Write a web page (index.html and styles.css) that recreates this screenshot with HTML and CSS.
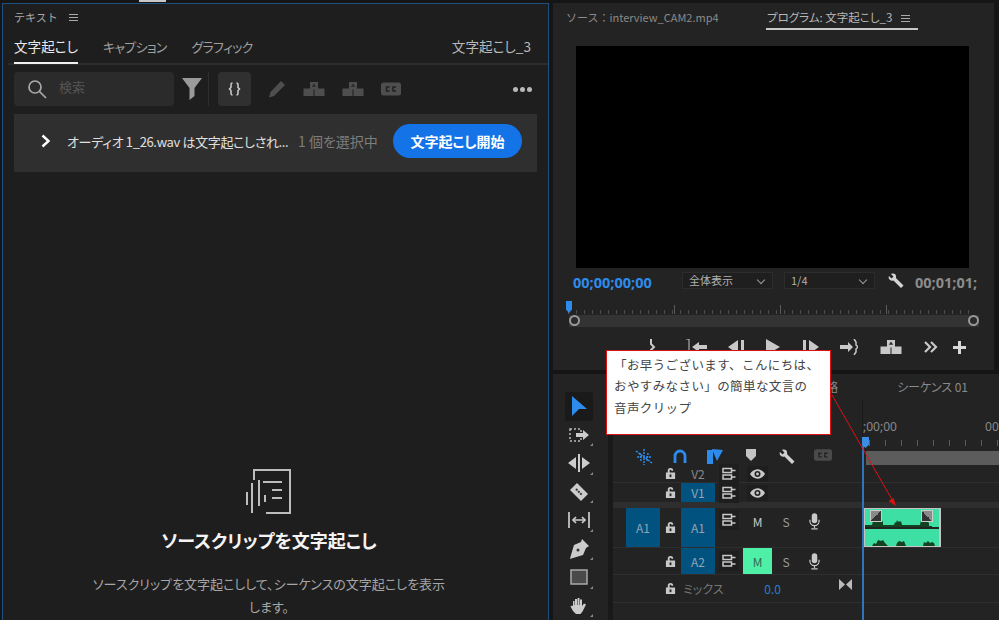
FILE: index.html
```html
<!DOCTYPE html>
<html lang="ja">

<head>
    <meta charset="UTF-8" />
    <meta name="viewport" content="width=device-width, initial-scale=1" />
    <title>文字起こし</title>
    <link rel="stylesheet" href="styles.css">
</head>

<body>
    <svg class="defs" width="0" height="0">
        <symbol id="i-lock" viewBox="0 0 12 14">
            <path d="M3 6V4a3 3 0 0 1 6 0h-2a1 1 0 0 0-2 0v2h6v7H1V6z" fill="currentColor" />
            <rect x="5" y="8" width="2" height="3" fill="#222" />
        </symbol>
        <symbol id="i-sync" viewBox="0 0 14 14">
            <path d="M1 1.500h8.500v4H1zM1 8h8.500v4H1zM9.500 3.500h4M9.500 10h4" fill="none" stroke="currentColor" stroke-width="1.500" />
        </symbol>
        <symbol id="i-eye" viewBox="0 0 16 10">
            <path d="M8 0c3.500 0 6.500 2.500 8 5-1.500 2.500-4.500 5-8 5S1.500 7.500 0 5c1.500-2.500 4.500-5 8-5z" fill="currentColor" />
            <circle cx="8" cy="5" r="3.200" fill="#222" />
            <circle cx="8" cy="5" r="1.500" fill="currentColor" />
        </symbol>
        <symbol id="i-mic" viewBox="0 0 12 18">
            <rect x="3" y="0" width="6" height="11" rx="3" fill="currentColor" />
            <path d="M1 7v1.500a5 5 0 0 0 10 0V7M6 13.500V16M2.500 17h7" fill="none" stroke="currentColor" stroke-width="1.300" />
        </symbol>
        <symbol id="i-lift" viewBox="0 0 22 14">
            <path d="M7 0h8v6.500h6.500V14h-10V7.500h-1V14H.5V6.500H7z" fill="currentColor" />
            <path d="M11 1.500l2.200 3.200H8.800z" fill="#2a2a2a" />
        </symbol>
        <symbol id="i-cc" viewBox="0 0 20 13">
            <rect width="20" height="13" rx="2.500" fill="currentColor" />
            <path d="M8.500 4.500H5.500v4h3M15 4.500h-3v4h3" fill="none" stroke="#222" stroke-width="1.500" />
        </symbol>
        <symbol id="i-wrench" viewBox="0 0 16 16">
            <path d="M1 3l2.500 2.500L5.500 3.500 3 1c2-1 4.500-.5 5 2 .2.800.1 1.500-.1 2.100L15.500 12.500 13 15 5.500 7.500C3 8.500-.5 6.500 1 3z" fill="currentColor" />
        </symbol>
    </svg>

    <div class="escritorio">
        <!-- panel de texto -->
        <section class="panel-texto">
            <header class="panel-cabecera">
                <span>テキスト</span>
                <span class="menu-lineas"></span>
            </header>
            <nav class="pestanas">
                <span class="pestana pestana-activa">文字起こし</span>
                <span class="pestana pestana-kana">キャプション</span>
                <span class="pestana pestana-kana">グラフィック</span>
                <span class="pestana-secuencia">文字起こし_3</span>
            </nav>
            <div class="barra-busqueda">
                <div class="buscador">
                    <svg width="20" height="20" viewBox="0 0 20 20" fill="none" stroke="#aaa" stroke-width="1.700">
                        <circle cx="8" cy="8" r="6" />
                        <path d="M12.500 12.500L19 19" />
                    </svg>
                    <span>検索</span>
                </div>
                <svg class="icono-filtro" width="20" height="24" viewBox="0 0 20 24">
                    <path d="M0 1h20l-7.500 10v8l-5 4V11z" fill="#9a9a9a" />
                </svg>
                <span class="separador"></span>
                <div class="boton-llaves">
                    <svg width="13" height="14" viewBox="0 0 13 14" fill="none" stroke="#ccc" stroke-width="1.500">
                        <path d="M4.500 1C3 1 3 2 3 3v2.500L1.500 7 3 8.500V11c0 1 0 2 1.500 2M8.500 1C10 1 10 2 10 3v2.500L11.500 7 10 8.500V11c0 1 0 2-1.500 2" />
                    </svg>
                </div>
                <svg class="icono-lapiz" width="18" height="18" viewBox="0 0 18 18">
                    <path d="M13 1l4 4L6 16l-5 1.500L2.500 12z" fill="#4e4e4e" />
                </svg>
                <svg class="icono-apagado" width="22" height="14"><use href="#i-lift" /></svg>
                <svg class="icono-apagado" width="22" height="14"><use href="#i-lift" /></svg>
                <svg class="icono-apagado" width="20" height="14"><use href="#i-cc" /></svg>
                <span class="puntos"><i></i><i></i><i></i></span>
            </div>
            <div class="aviso">
                <svg width="12" height="14" viewBox="0 0 12 14" fill="none" stroke="#fff" stroke-width="2.400">
                    <path d="M2.500 1.500L8.500 7l-6 5.500" />
                </svg>
                <span class="aviso-texto">オーディオ 1_26.wav は文字起こしされ...</span>
                <span class="aviso-cuenta">1 個を選択中</span>
                <button class="boton-iniciar">文字起こし開始</button>
            </div>
            <div class="vacio">
                <svg width="46" height="47" viewBox="0 0 46 47" fill="none" stroke="#bdbdbd" stroke-width="2">
                    <path d="M8 12V2h36v43H20M17 14h19M26 22h10M26 30h10M1 24v13M6 15v30M13 12v26M19 27v7" />
                </svg>
                <h2>ソースクリップを文字起こし</h2>
                <p>ソースクリップを文字起こしして、シーケンスの文字起こしを表示します。</p>
            </div>
        </section>

        <div class="columna-derecha">
            <!-- monitor de programa -->
            <section class="monitor">
                <nav class="monitor-pestanas">
                    <span class="monitor-fuente">ソース：interview_CAM2.mp4</span>
                    <span class="monitor-programa">プログラム: 文字起こし_3 <span class="menu-lineas"></span></span>
                </nav>
                <div class="video"></div>
                <div class="monitor-controles">
                    <span class="tiempo-azul">00;00;00;00</span>
                    <span class="desplegable">全体表示</span>
                    <span class="desplegable">1/4</span>
                    <svg class="llave" width="16" height="16"><use href="#i-wrench" /></svg>
                    <span class="tiempo-total">00;01;01;</span>
                </div>
                <div class="regla-programa"><span class="cabezal-programa"></span></div>
                <div class="barra-zoom"><i></i><i></i></div>
                <div class="transporte">
                    <svg width="14" height="16" viewBox="0 0 14 16" fill="none" stroke="#c8c8c8" stroke-width="2"><path d="M6 0v5l3 3-3 3v5" /></svg>
                    <svg width="22" height="16" viewBox="0 0 22 16" fill="#c8c8c8"><path d="M3 0v16M0 0h3" stroke="#c8c8c8" /><path d="M6 8l7-5v3h8v4h-8v3z" /></svg>
                    <svg width="16" height="14" viewBox="0 0 16 14" fill="#c8c8c8"><path d="M10 0v14L0 7zM13 0h3v14h-3z" /></svg>
                    <svg width="14" height="16" viewBox="0 0 14 16" fill="#c8c8c8"><path d="M0 0l14 8-14 8z" /></svg>
                    <svg width="16" height="14" viewBox="0 0 16 14" fill="#c8c8c8"><path d="M6 0v14l10-7zM0 0h3v14H0z" /></svg>
                    <svg width="18" height="16" viewBox="0 0 18 16" fill="#c8c8c8"><path d="M0 6h8V3l5 5-5 5v-3H0z" /><path d="M14 0l2 3v3l2 2-2 2v3l-2 3" fill="none" stroke="#c8c8c8" stroke-width="1.500" /></svg>
                    <svg class="transporte-claro" width="22" height="14"><use href="#i-lift" /></svg>
                    <svg width="14" height="12" viewBox="0 0 14 12" fill="none" stroke="#c8c8c8" stroke-width="2.200"><path d="M1 1l5 5-5 5M7 1l5 5-5 5" /></svg>
                    <svg width="13" height="13" viewBox="0 0 13 13" fill="#d8d8d8"><path d="M5 0h3v5h5v3H8v5H5V8H0V5h5z" /></svg>
                </div>
            </section>

            <!-- linea de tiempo -->
            <section class="linea-tiempo">
                <aside class="herramientas">
                    <span class="herramienta herramienta-activa">
                        <svg width="16" height="20" viewBox="0 0 16 20"><path d="M1 0l15 13H8l-7 7z" fill="#2d8ceb" /></svg>
                    </span>
                    <span class="herramienta">
                        <svg width="20" height="14" viewBox="0 0 20 14"><path d="M1 1h11v12H1z" fill="none" stroke="#bbb" stroke-dasharray="2 2" stroke-width="1.500" /><path d="M7 5h7V2l6 5-6 5V9H7z" fill="#ccc" /></svg>
                    </span>
                    <span class="herramienta">
                        <svg width="22" height="18" viewBox="0 0 22 18" fill="#ccc"><path d="M0 9l8-6v12zM22 9l-8-6v12zM10 0h2v18h-2z" /></svg>
                    </span>
                    <span class="herramienta">
                        <svg width="18" height="18" viewBox="0 0 18 18"><path d="M7 0l11 11-7 7L0 7z" fill="#ccc" /><path d="M6 6l6 6" stroke="#333" stroke-width="2" stroke-dasharray="2 1" /></svg>
                    </span>
                    <span class="herramienta">
                        <svg width="22" height="16" viewBox="0 0 22 16" fill="none" stroke="#ccc" stroke-width="1.700"><path d="M1 0v16M21 0v16M5 8h12" /><path d="M8 5L5 8l3 3M14 5l3 3-3 3" /></svg>
                    </span>
                    <span class="herramienta">
                        <svg width="20" height="20" viewBox="0 0 20 20"><path d="M13 0l7 7-3 2-3 7-10 3-3 1 1-4 3-10 7-3z" fill="#ccc" /><circle cx="9" cy="11" r="1.500" fill="#333" /></svg>
                    </span>
                    <span class="herramienta">
                        <svg width="18" height="16" viewBox="0 0 18 16"><rect x="1" y="1" width="16" height="14" fill="#4a4a4a" stroke="#aaa" stroke-width="1.500" /></svg>
                    </span>
                    <span class="herramienta">
                        <svg width="18" height="18" viewBox="0 0 18 18"><path d="M3 9V4h1.500v4H5V2h2v6h.5V1h2v7h.5V2.500h2V9l2-2.500 2 1-3.500 7-2 2.500H6L3 14 .5 9.500 2 8.500z" fill="#ccc" /></svg>
                    </span>
                </aside>
                <div class="secuencia">
                    <nav class="secuencia-pestanas">
                        <span>略</span>
                        <span>シーケンス 01</span>
                    </nav>
                    <div class="secuencia-cabecera">
                        <div class="iconos-pista">
                            <svg width="18" height="16" viewBox="0 0 18 16" fill="none" stroke="#2d8ceb" stroke-width="1.500"><path d="M9 0v16M1 2l16 12M2 8h14M5 4l1 8M13 4l-1 8" stroke-dasharray="2 1" /></svg>
                            <svg width="14" height="14" viewBox="0 0 14 14" fill="none" stroke="#2d8ceb" stroke-width="2.800"><path d="M2 14V7a5 5 0 0 1 10 0v7" /></svg>
                            <svg width="16" height="16" viewBox="0 0 16 16"><path d="M0 1h6v14H0z" fill="#2d8ceb" /><path d="M5 0l11 1-6 11z" fill="#2d8ceb" /></svg>
                            <svg width="10" height="12" viewBox="0 0 10 12"><path d="M0 0h10v7l-5 5-5-5z" fill="#c4c4c4" /></svg>
                            <svg width="16" height="16" class="claro"><use href="#i-wrench" /></svg>
                            <svg width="18" height="12" class="apagado"><use href="#i-cc" /></svg>
                        </div>
                        <div class="tiempo-regla">
                            <div class="tiempo-marcas"><span>;00;00</span><span>00;</span></div>
                            <div class="regla-secuencia"></div>
                            <div class="zona-gris"></div>
                        </div>
                    </div>
                    <div class="pista pista-v2">
                        <svg class="c-candado" width="11" height="13"><use href="#i-lock" /></svg>
                        <span class="c-destino etiqueta-v2">V2</span>
                        <svg class="c-sync" width="14" height="14"><use href="#i-sync" /></svg>
                        <svg class="c-m ojo" width="15" height="10"><use href="#i-eye" /></svg>
                        <div class="carril"></div>
                    </div>
                    <div class="pista pista-v1">
                        <svg class="c-candado" width="11" height="13"><use href="#i-lock" /></svg>
                        <span class="c-destino caja-azul">V1</span>
                        <svg class="c-sync" width="14" height="14"><use href="#i-sync" /></svg>
                        <svg class="c-m ojo" width="15" height="10"><use href="#i-eye" /></svg>
                        <div class="carril"></div>
                    </div>
                    <div class="pista-separador"></div>
                    <div class="pista pista-a1">
                        <span class="c-origen caja-azul">A1</span>
                        <svg class="c-candado" width="11" height="13"><use href="#i-lock" /></svg>
                        <span class="c-destino caja-azul">A1</span>
                        <svg class="c-sync arriba" width="14" height="14"><use href="#i-sync" /></svg>
                        <span class="c-m arriba">M</span>
                        <span class="c-s arriba">S</span>
                        <svg class="c-mic arriba" width="11" height="17"><use href="#i-mic" /></svg>
                        <div class="carril">
                            <div class="clip">
                                <div class="clip-media">
                                    <span class="fundido fundido-izq"></span>
                                    <span class="fundido fundido-der"></span>
                                    <svg width="74" height="20" viewBox="0 0 74 20"><path d="M0 20v-2h7l1-4 1 1 1-2 1 1 1-3 1 2 1-1 1 1 1-1 2 3v3h11l1-3 1 1 1-3 1 2 1-1 1 1 1-1 1 4h18l1-5 1 2 1-1 1 1 1-3 1 2 1-1 1 2 1 1v3h3v2z" fill="#12421f" /></svg>
                                </div>
                                <div class="clip-media">
                                    <svg width="74" height="15" viewBox="0 0 74 15"><path d="M7 15l2-3 2 1 2-4 3 1 2-1 2 3 3 3zM31 15l1-3 2-2 3 1 2-1 2 5zM58 15l1-4 2 1 2-2 2 2 2-1 2 1 1 3z" fill="#12421f" /></svg>
                                </div>
                            </div>
                        </div>
                    </div>
                    <div class="pista pista-a2">
                        <svg class="c-candado" width="11" height="13"><use href="#i-lock" /></svg>
                        <span class="c-destino caja-azul">A2</span>
                        <svg class="c-sync" width="14" height="14"><use href="#i-sync" /></svg>
                        <span class="c-m silencio">M</span>
                        <span class="c-s">S</span>
                        <svg class="c-mic" width="11" height="17"><use href="#i-mic" /></svg>
                        <div class="carril"></div>
                    </div>
                    <div class="pista pista-mezcla">
                        <svg class="c-candado" width="11" height="13"><use href="#i-lock" /></svg>
                        <span class="mezcla-nombre">ミックス</span>
                        <span class="mezcla-valor">0.0</span>
                        <svg class="mezcla-icono" width="13" height="11" viewBox="0 0 13 11"><path d="M0 0l6 5.500L0 11zM13 0L7 5.500l6 5.500z" fill="#bbb" /></svg>
                        <div class="carril"></div>
                    </div>
                </div>
            </section>
        </div>
    </div>

    <!-- lo que queda encima -->
    <span class="cabezal"></span>
    <svg class="flecha" width="70" height="115" viewBox="0 0 70 115">
        <path d="M2 2L64 110" stroke="#e01010" stroke-width="1" />
        <path d="M66 113l-7.500-5 5-3z" fill="#e01010" />
    </svg>
    <div class="nota">
        <p>「お早うございます、こんにちは、</p>
        <p>おやすみなさい」の簡単な文言の</p>
        <p>音声クリップ</p>
    </div>
</body>

</html>
```

FILE: styles.css
```css
* {
    box-sizing: border-box;
}

body {
    font-family: "Noto Sans CJK JP", "Noto Sans", sans-serif;
    font-feature-settings: "palt";
    margin: 0;
    width: 999px;
    height: 620px;
    overflow: hidden;
    position: relative;
    background-color: #151515;
    color: #bbb;
}

body::before {
    content: "";
    position: absolute;
    left: 139px;
    top: 0;
    width: 27px;
    height: 2px;
    background-color: #c8c8c8;
}

.defs {
    position: absolute;
}

.escritorio {
    display: flex;
    gap: 4px;
    height: 620px;
    padding: 3px 0 0 2px;
}

.menu-lineas {
    display: inline-block;
    width: 9px;
    height: 7px;
    border-top: 1px solid #aaa;
    border-bottom: 1px solid #aaa;
    position: relative;
    vertical-align: middle;
}

.menu-lineas::after {
    content: "";
    position: absolute;
    left: 0;
    right: 0;
    top: 2px;
    border-top: 1px solid #aaa;
}

/* panel de texto */
.panel-texto {
    width: 547px;
    flex: none;
    background-color: #1e1e1e;
    border: 1px solid #1f4f80;
    border-bottom: none;
    display: flex;
    flex-direction: column;
}

.panel-cabecera {
    height: 26px;
    margin-bottom: 2px;
    padding-left: 11px;
    display: flex;
    align-items: center;
    gap: 11px;
    font-feature-settings: normal;
    font-size: 11px;
    color: #a8a8a8;
}

.pestanas {
    height: 33px;
    margin-left: 5px;
    padding: 0 17px 0 6px;
    display: flex;
    gap: 25px;
    border-bottom: 2px solid #2c2c2c;
    font-size: 13.600px;
    line-height: 29px;
    color: #a0a0a0;
}

.pestana {
    height: 32px;
}

.pestana-kana {
    font-size: 13px;
    letter-spacing: -0.750px;
}

.pestana-activa {
    color: #e8e8e8;
    border-bottom: 2px solid #f0f0f0;
}

.pestana-secuencia {
    margin-left: auto;
    color: #b8b8b8;
}

.barra-busqueda {
    display: flex;
    align-items: center;
    height: 34px;
    margin-top: 7px;
    padding-left: 11px;
}

.buscador {
    width: 160px;
    height: 34px;
    background-color: #2b2b2b;
    border-radius: 4px;
    display: flex;
    align-items: center;
    gap: 12px;
    padding-left: 13px;
    font-size: 13px;
    color: #555;
}

.buscador span {
    margin-bottom: 5px;
}

.icono-filtro {
    margin-left: 8px;
}

.separador {
    width: 1px;
    height: 34px;
    background-color: #2e2e2e;
    margin: 0 9px 0 6px;
}

.boton-llaves {
    width: 33px;
    height: 34px;
    background-color: #303030;
    border-radius: 4px;
    display: flex;
    align-items: center;
    justify-content: center;
}

.icono-lapiz {
    margin-left: 17px;
}

.icono-apagado {
    color: #4e4e4e;
    margin-left: 17px;
}

.puntos {
    margin-left: auto;
    margin-right: 16px;
    display: flex;
    gap: 2px;
}

.puntos i {
    width: 5px;
    height: 5px;
    border-radius: 50%;
    background-color: #b8b8b8;
}

.aviso {
    height: 58px;
    margin: 8px 11px 0;
    background-color: #2f2f2f;
    display: flex;
    align-items: center;
    padding: 0 15px 4px 26px;
    font-size: 13px;
    color: #e0e0e0;
}

.aviso-texto {
    margin-left: 15px;
    width: 231px;
    white-space: nowrap;
    letter-spacing: -0.350px;
}

.aviso-cuenta {
    font-size: 14px;
    color: #7d7d7d;
}

.boton-iniciar {
    margin-left: auto;
    width: 129px;
    height: 34px;
    border: none;
    border-radius: 17px;
    background-color: #1473e6;
    color: white;
    font-family: inherit;
    font-feature-settings: inherit;
    font-size: 14px;
    font-weight: bold;
}

.vacio {
    margin-top: 296px;
    padding-right: 13px;
    display: flex;
    flex-direction: column;
    align-items: center;
}

.vacio h2 {
    margin: 12px 0 0;
    font-size: 18px;
    line-height: 26px;
    color: #f4f4f4;
}

.vacio p {
    width: 360px;
    margin: 19px 0 0;
    font-size: 13px;
    line-height: 23px;
    text-align: center;
    color: #a6a6a6;
}

/* monitor */
.columna-derecha {
    flex: 1;
    display: flex;
    flex-direction: column;
    gap: 4px;
    min-width: 0;
}

.monitor {
    height: 367px;
    width: 441px;
    background-color: #232323;
    padding: 0 0 0 23px;
    overflow: hidden;
}

.monitor-pestanas {
    height: 43px;
    display: flex;
    font-size: 11px;
    color: #8a8a8a;
    margin-left: -10px;
    font-feature-settings: normal;
}

.monitor-fuente {
    width: 200px;
    padding-top: 6px;
    white-space: nowrap;
}

.monitor-programa {
    height: 27px;
    width: 152px;
    padding: 6px 0 0 1px;
    color: #b8b8b8;
    border-bottom: 2px solid #c8c8c8;
    font-feature-settings: "palt";
    font-size: 11.500px;
    white-space: nowrap;
}

.monitor-programa .menu-lineas {
    margin-left: 6px;
}

.video {
    width: 393px;
    height: 222px;
    background-color: black;
}

.monitor-controles {
    height: 21px;
    margin: 2px 0 0 -3px;
    display: flex;
    align-items: center;
    font-size: 12px;
}

.tiempo-azul {
    width: 109px;
    margin-top: 2px;
    font-size: 14.500px;
    font-weight: bold;
    color: #2d8ceb;
    font-family: "Noto Sans", sans-serif;
    white-space: nowrap;
}

.desplegable {
    width: 91px;
    height: 17px;
    margin-right: 11px;
    padding-left: 6px;
    border: 1px solid #2c2c2c;
    background-color: #1f1f1f;
    font-size: 11px;
    line-height: 14px;
    position: relative;
    color: #b0b0b0;
}

.desplegable::after {
    content: "";
    position: absolute;
    right: 8px;
    top: 4px;
    width: 5px;
    height: 5px;
    border-right: 1px solid #999;
    border-bottom: 1px solid #999;
    transform: rotate(45deg);
}

.llave {
    color: #d4d4d4;
    margin-left: 2px;
}

.tiempo-total {
    margin-left: 11px;
    margin-top: 2px;
    font-size: 14.500px;
    font-weight: bold;
    color: #8c8c8c;
    font-family: "Noto Sans", sans-serif;
    white-space: nowrap;
}

.regla-programa {
    position: relative;
    width: 408px;
    height: 13px;
    margin: 10px 0 0 -8px;
    background-image:
        repeating-linear-gradient(90deg, #5a5a5a 0 1px, transparent 1px 106px),
        repeating-linear-gradient(90deg, #4a4a4a 0 1px, transparent 1px 8px);
    background-size: 100% 9px, 100% 4px;
    background-position: 0 bottom, 0 bottom;
    background-repeat: no-repeat;
}

.cabezal-programa {
    position: absolute;
    left: -2px;
    top: 0;
    width: 6px;
    height: 12px;
    background-color: #2d8ceb;
    clip-path: polygon(0 0, 100% 0, 100% 70%, 50% 100%, 0 70%);
}

.barra-zoom {
    width: 410px;
    height: 12px;
    margin: 1px 0 0 -7px;
    background-color: #333;
    display: flex;
    justify-content: space-between;
}

.barra-zoom i {
    width: 11px;
    height: 11px;
    border-radius: 50%;
    border: 2px solid #999;
    background-color: #2a2a2a;
}

.transporte {
    height: 18px;
    margin: 11px 0 0 52px;
    display: grid;
    grid-template-columns: 48px 42px 36px 38px 38px 38px 46px 34px 22px;
    justify-items: center;
    align-items: center;
}

.transporte-claro {
    color: #c8c8c8;
}

/* linea de tiempo */
.linea-tiempo {
    flex: 1;
    display: flex;
    background-color: #232323;
    min-height: 0;
    width: 446px;
}

.herramientas {
    width: 60px;
    flex: none;
    padding: 18px 3px 0 0;
    display: flex;
    flex-direction: column;
    align-items: center;
    border-right: 5px solid #191919;
}

.herramienta {
    width: 28px;
    height: 28.500px;
    flex: none;
    display: flex;
    align-items: center;
    justify-content: center;
    position: relative;
}

.herramienta-activa {
    background-color: #1a1a1a;
    border-radius: 2px;
}

.herramienta::after {
    content: "";
    position: absolute;
    right: 0;
    bottom: 3px;
    border-right: 3px solid #888;
    border-top: 3px solid transparent;
}

.herramienta-activa::after {
    display: none;
}

.secuencia {
    flex: 1;
    min-width: 0;
    display: flex;
    flex-direction: column;
    overflow: hidden;
}

.secuencia-pestanas {
    height: 26px;
    display: flex;
    font-size: 12px;
    line-height: 26px;
    color: #8a8a8a;
    padding-left: 213px;
    gap: 59px;
    white-space: nowrap;
}

.secuencia-cabecera {
    height: 65px;
    display: grid;
    grid-template-columns: 250px 1fr;
}

.iconos-pista {
    display: grid;
    grid-template-columns: repeat(6, 35.800px);
    padding: 49px 0 0 13px;
    justify-items: center;
    align-items: start;
    border-right: 1px solid #1a1a1a;
}

.claro {
    color: #d0d0d0;
}

.apagado {
    color: #4a4a4a;
}

.tiempo-marcas {
    height: 37px;
    padding-top: 19px;
    display: flex;
    justify-content: space-between;
    font-size: 12px;
    line-height: 16px;
    color: #8a8a8a;
    font-family: "Noto Sans", sans-serif;
    white-space: nowrap;
    margin-right: -3px;
}

.regla-secuencia {
    height: 14px;
    margin-top: 0;
    background-image: repeating-linear-gradient(90deg, #5a5a5a 0 1px, transparent 1px 16px);
    background-size: 100% 6px;
    background-repeat: no-repeat;
    background-position: 6px 3px;
}

.zona-gris {
    height: 14px;
    margin-left: 3px;
    background-color: #5c5c5c;
}

.pista {
    display: grid;
    grid-template-columns: 13px 34px 21px 34px 28px 29px 28px 28px 35px 1fr;
    align-items: center;
    justify-items: center;
    border-bottom: 1px solid #2e2e2e;
    font-size: 12px;
    color: #9c9c9c;
    flex: none;
}

.pista > * {
    grid-row: 1;
}

.pista-v2 {
    height: 18px;
}

.pista-v1 {
    height: 20px;
}

.pista-separador {
    height: 5px;
    background-color: #2e2e2e;
    flex: none;
}

.pista-a1 {
    height: 40px;
}

.pista-a2 {
    height: 27px;
}

.pista-mezcla {
    height: 28px;
}

.c-origen {
    grid-column: 2;
}

.c-candado {
    grid-column: 3;
    color: #c8c8c8;
}

.c-destino {
    grid-column: 4;
}

.c-sync {
    grid-column: 5;
    color: #c8c8c8;
    background-color: #1e1e1e;
    outline: 3px solid #1e1e1e;
}

.c-m {
    grid-column: 6;
    color: #c8c8c8;
}

.ojo {
    background-color: #1e1e1e;
    outline: 3px solid #1e1e1e;
}

.c-s {
    grid-column: 7;
}

.c-mic {
    grid-column: 8;
    color: #c8c8c8;
}

.carril {
    grid-column: 10;
    justify-self: stretch;
    align-self: stretch;
    border-left: 1px solid #1a1a1a;
}

.arriba {
    align-self: start;
    margin-top: 5px;
}

.etiqueta-v2 {
    color: #8a8a8a;
    align-self: end;
}

.caja-azul {
    align-self: stretch;
    justify-self: stretch;
    background-color: #02527f;
    color: #8fa6b5;
    display: flex;
    align-items: center;
    justify-content: center;
}

.silencio {
    align-self: stretch;
    justify-self: stretch;
    background-color: #4ef0a8;
    color: #2f6b55;
    display: flex;
    align-items: center;
    justify-content: center;
}

.mezcla-nombre {
    grid-column: 4 / 6;
    justify-self: start;
    margin-left: 2px;
    color: #777;
}

.mezcla-valor {
    grid-column: 6 / 8;
    margin-left: 2px;
    color: #2d7bd0;
}

.mezcla-icono {
    grid-column: 9;
    margin-bottom: 8px;
}

.clip {
    width: 77px;
    height: 39px;
    background-color: #222;
    border: 1px solid #c4c4c4;
    border-right: 2px solid #c4c4c4;
    display: flex;
    flex-direction: column;
    gap: 2px;
}

.clip-media {
    flex: 1;
    background-color: #3ddfa5;
    position: relative;
    display: flex;
    align-items: flex-end;
    overflow: hidden;
}

.fundido {
    position: absolute;
    top: 1px;
    width: 12px;
    height: 12px;
    border: 1px solid #ccc;
}

.fundido-izq {
    left: 5px;
    background: linear-gradient(135deg, #8a8a8a 50%, #333 50%);
}

.fundido-der {
    right: 6px;
    background: linear-gradient(225deg, #8a8a8a 50%, #333 50%);
}

/* encima */
.cabezal {
    position: absolute;
    left: 862px;
    top: 437px;
    width: 2px;
    height: 183px;
    background-color: #2f74bd;
}

.cabezal::before {
    content: "";
    position: absolute;
    left: 0;
    top: 0;
    width: 7px;
    height: 11px;
    background-color: #3a8ee6;
    clip-path: polygon(0 0, 100% 0, 100% 70%, 50% 100%, 0 70%);
}

.flecha {
    position: absolute;
    left: 830px;
    top: 393px;
}

.nota {
    position: absolute;
    left: 606px;
    top: 350px;
    width: 225px;
    height: 85px;
    background-color: white;
    border: 1px solid #e01010;
    padding: 3px 7px;
    font-feature-settings: normal;
    font-size: 12.500px;
    letter-spacing: 0.400px;
    line-height: 21.400px;
    color: #444;
}

.nota p {
    margin: 0;
    white-space: nowrap;
}
```
